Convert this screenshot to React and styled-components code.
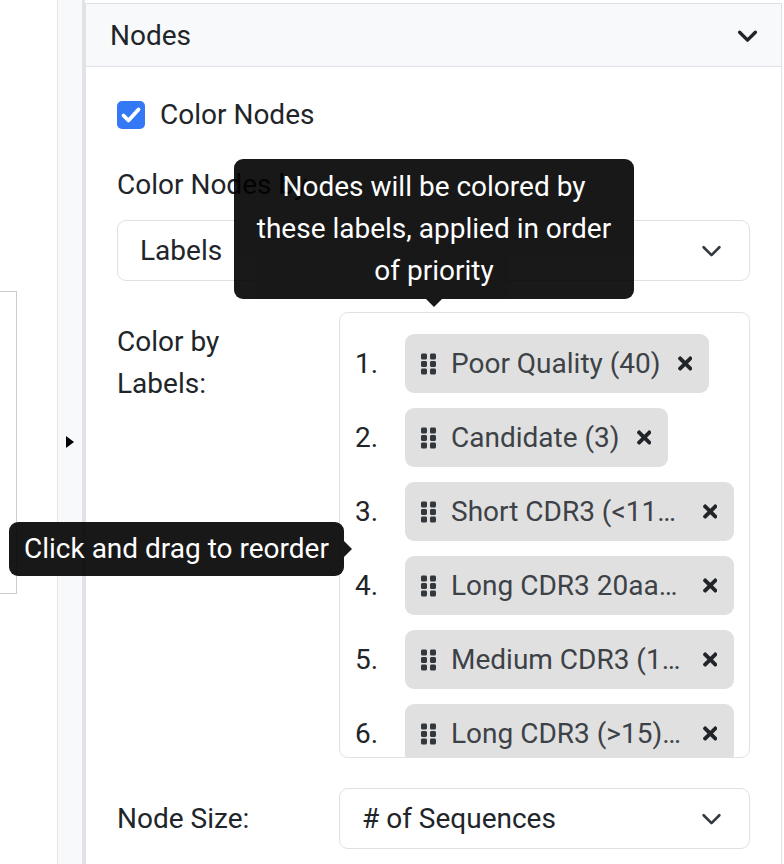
import React from "react";
import styled, { createGlobalStyle } from "styled-components";
import { FaGripVertical, FaTimes } from "react-icons/fa";

const Global = createGlobalStyle`
  html, body { margin: 0; padding: 0; background: #fff; overflow: hidden; }
  body {
    font-family: Roboto, "Liberation Sans", Arial, sans-serif;
    color: #212529;
    font-size: 28px;
    line-height: 1.5;
  }
  * { box-sizing: border-box; }
`;

const Page = styled.div`
  display: flex;
  width: 784px;
  height: 884px;
`;

const LeftPane = styled.div`
  width: 57px;
  flex: none;
  display: flex;
  align-items: center;
`;

const OffBox = styled.div`
  margin-left: -20px;
  width: 37px;
  height: 303px;
  border: 1px solid #c9cdd2;
  background: #fff;
`;

const Strip = styled.div`
  width: 28px;
  flex: none;
  background: #f8f9fa;
  border-left: 1px solid #e4e6e9;
  border-right: 3px solid #e1e3e7;
  display: flex;
  align-items: center;
  justify-content: center;
`;

const Caret = styled.span`
  width: 0;
  height: 0;
  border-left: 8px solid #000;
  border-top: 6px solid transparent;
  border-bottom: 6px solid transparent;
`;

const Panel = styled.section`
  width: 697px;
  flex: none;
  margin-top: 3px;
  border: 1px solid #dee2e6;
  border-bottom: none;
  background: #fff;
`;

const Header = styled.div`
  height: 63px;
  background: #f8f9fa;
  border-bottom: 1px solid #dee2e6;
  display: flex;
  align-items: center;
  justify-content: space-between;
  padding: 1px 23px 0 24px;
`;

const HeaderTitle = styled.span`
  font-size: 28px;
  color: #212529;
`;

const Body = styled.div`
  position: relative;
  padding: 27px 31px 0 31px;
`;

const CheckRow = styled.label`
  display: flex;
  align-items: center;
  gap: 15px;
  height: 42px;
`;

const CheckBox = styled.span`
  width: 28px;
  height: 28px;
  border-radius: 5px;
  background: #3478f6;
  display: flex;
  align-items: center;
  justify-content: center;
`;

const FieldLabel = styled.div`
  margin-top: 28px;
  height: 42px;
`;

const Select = styled.div`
  margin-top: ${(p) => p.$mt || 0}px;
  height: 61px;
  border: 1px solid #dee2e6;
  border-radius: 9px;
  display: flex;
  align-items: center;
  justify-content: space-between;
  padding: 0 27px 0 22px;
  color: #212529;
`;

const FormRow = styled.div`
  display: grid;
  grid-template-columns: 222px 1fr;
  align-items: ${(p) => (p.$center ? "center" : "start")};
  margin-top: ${(p) => p.$mt}px;
`;

const RowLabel = styled.div`
  padding-top: ${(p) => p.$pt || 0}px;
`;

const ListBox = styled.div`
  height: 446px;
  border: 1px solid #dee2e6;
  border-radius: 9px;
  padding: 21px 15px 0;
  overflow: hidden;
  display: flex;
  flex-direction: column;
  gap: 15px;
`;

const ListItem = styled.div`
  display: flex;
  align-items: center;
  flex: none;
`;

const Num = styled.span`
  width: 50px;
  flex: none;
  color: #212529;
`;

const Chip = styled.div`
  display: inline-flex;
  align-items: center;
  height: 59px;
  max-width: 330px;
  padding: 0 17px 0 16px;
  background: #e0e0e0;
  border-radius: 9px;
  color: #3d4247;
  min-width: 0;
`;

const Grip = styled.span`
  display: flex;
  flex: none;
  margin-right: 15px;
  color: #33383d;
  svg { width: 15px; height: 24px; }
`;

const ChipText = styled.span`
  white-space: nowrap;
  overflow: hidden;
  text-overflow: ellipsis;
  min-width: 0;
  flex: 1 1 auto;
`;

const Close = styled.span`
  display: flex;
  flex: none;
  margin-left: 17px;
  color: #212529;
  svg { width: 14.5px; height: 21px; }
`;

const Tooltip = styled.div`
  position: absolute;
  left: ${(p) => p.$left}px;
  top: ${(p) => p.$top}px;
  width: ${(p) => (p.$width ? `${p.$width}px` : "auto")};
  white-space: ${(p) => (p.$width ? "normal" : "nowrap")};
  background: #000;
  opacity: 0.9;
  color: #fff;
  text-align: center;
  border-radius: 9px;
  padding: ${(p) => p.$pad};
  line-height: 42px;
  z-index: 5;

  &::after {
    content: "";
    position: absolute;
    width: 0;
    height: 0;
    ${(p) =>
      p.$arrow === "down"
        ? `left: 50%; bottom: -8px; margin-left: -8px;
           border-top: 8px solid #000; border-left: 8px solid transparent; border-right: 8px solid transparent;`
        : `right: -8px; top: 50%; margin-top: -8px;
           border-left: 8px solid #000; border-top: 8px solid transparent; border-bottom: 8px solid transparent;`}
  }
`;

const Chevron = ({ w = 2, color = "#212529" }) => (
  <svg width="21" height="21" viewBox="0 0 16 16" fill="none">
    <path d="M2 5.5l6 6 6-6" stroke={color} strokeWidth={w} strokeLinecap="round" strokeLinejoin="round" />
  </svg>
);

const Check = () => (
  <svg width="28" height="28" viewBox="0 0 28 28" fill="none">
    <path d="M6.5 14.5l5 5 10-11" stroke="#fff" strokeWidth="3.8" strokeLinecap="round" strokeLinejoin="round" />
  </svg>
);

const labels = [
  "Poor Quality (40)",
  "Candidate (3)",
  "Short CDR3 (<11aa) (12)",
  "Long CDR3 20aa+ (5)",
  "Medium CDR3 (11-15aa) (22)",
  "Long CDR3 (>15) (9)",
];

export default function App() {
  return (
    <>
      <Global />
      <Page>
        <LeftPane>
          <OffBox />
        </LeftPane>
        <Strip>
          <Caret />
        </Strip>
        <Panel>
          <Header>
            <HeaderTitle>Nodes</HeaderTitle>
            <Chevron w={2.6} color="#212529" />
          </Header>
          <Body>
            <CheckRow>
              <CheckBox>
                <Check />
              </CheckBox>
              <span>Color Nodes</span>
            </CheckRow>
            <FieldLabel>Color Nodes by</FieldLabel>
            <Select $mt={14}>
              <span>Labels</span>
              <Chevron w={2} color="#343a40" />
            </Select>
            <FormRow $mt={31}>
              <RowLabel $pt={9}>
                Color by
                <br />
                Labels:
              </RowLabel>
              <ListBox>
                {labels.map((l, i) => (
                  <ListItem key={l}>
                    <Num>{i + 1}.</Num>
                    <Chip>
                      <Grip>
                        <FaGripVertical />
                      </Grip>
                      <ChipText>{l}</ChipText>
                      <Close>
                        <FaTimes />
                      </Close>
                    </Chip>
                  </ListItem>
                ))}
              </ListBox>
            </FormRow>
            <FormRow $mt={30} $center>
              <RowLabel>Node Size:</RowLabel>
              <Select>
                <span># of Sequences</span>
                <Chevron w={2} color="#343a40" />
              </Select>
            </FormRow>
            <Tooltip $left={148} $top={92} $width={400} $pad="7px 16px" $arrow="down">
              Nodes will be colored by these labels, applied in order of priority
            </Tooltip>
            <Tooltip $left={-77} $top={455} $pad="6px 15px" $arrow="right">
              Click and drag to reorder
            </Tooltip>
          </Body>
        </Panel>
      </Page>
    </>
  );
}
